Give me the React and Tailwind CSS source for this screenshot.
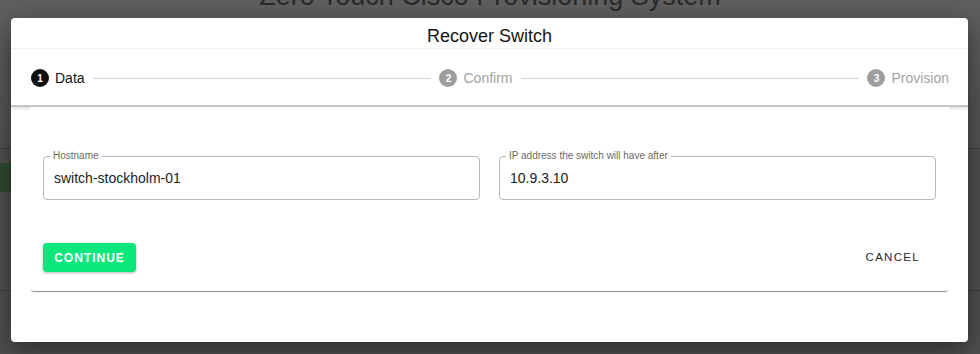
import React from 'react';

const StepIcon = ({ n, active }) => (
  <span
    className={`flex h-[18px] w-[18px] shrink-0 items-center justify-center rounded-full text-[10px] font-bold text-white ${
      active ? 'bg-[#111111]' : 'bg-[#9e9e9e]'
    }`}
  >
    {n}
  </span>
);

const Step = ({ n, label, active }) => (
  <div className="flex items-center gap-[6px]">
    <StepIcon n={n} active={active} />
    <span className={`text-[14px] ${active ? 'text-[#141414]' : 'text-[#a3a3a3]'}`}>{label}</span>
  </div>
);

const Field = ({ label, value }) => (
  <div className="relative h-[44px] flex-1 rounded-[4px] border border-[#b9b9b9]">
    <span className="absolute left-[6px] top-[-7px] bg-white px-[3px] text-[10px] leading-[12px] text-[#6b6b6b]">
      {label}
    </span>
    <div className="flex h-full items-center pl-[10px] pt-[1px] text-[14px] text-[#222222]">{value}</div>
  </div>
);

export default function App() {
  return (
    <div
      className="relative h-[354px] w-[980px] overflow-hidden bg-[#4f4f4f]"
      style={{ fontFamily: '"Liberation Sans", Arial, sans-serif' }}
    >
      {/* page behind the dialog */}
      <div className="flex h-[148px] flex-col bg-gradient-to-b from-[#5f5f5f] to-[#525252]">
        <div className="mt-[-21px] text-center text-[27px] leading-[34px] text-[#2a2a2a]">
          Zero Touch Cisco Provisioning System
        </div>
      </div>
      <div className="border-t border-[#3f3f3f] pt-[14px]">
        <div className="flex h-[29px] w-[40px] items-center justify-end bg-[#2f4a30] pr-[4px] text-[13px] text-[#5d6d5d]">
          39
        </div>
      </div>
      <div className="mt-[98px] border-t border-[#3c3c3c]" />

      {/* dialog */}
      <div className="absolute left-[11px] top-[18px] flex h-[324px] w-[957px] flex-col rounded-[4px] bg-white shadow-[0_8px_24px_rgba(0,0,0,0.45)]">
        <div className="flex h-[31px] items-center justify-center border-b border-[#f2f2f2] pt-[6px] text-[18px] text-[#151515]">
          Recover Switch
        </div>

        <div className="flex h-[58px] items-center border-b-2 border-[#c4c4c4] pl-[20px] pr-[19px] pt-[2px] shadow-[0_2px_3px_rgba(0,0,0,0.12)]">
          <Step n={1} label="Data" active />
          <div className="mx-[8px] h-px flex-1 bg-[#d4d4d4]" />
          <Step n={2} label="Confirm" />
          <div className="mx-[8px] h-px flex-1 bg-[#d4d4d4]" />
          <Step n={3} label="Provision" />
        </div>

        <div className="mx-[19px] rounded-b-[4px] bg-white px-[13px] pb-[19px] pt-[49px] shadow-[0_2px_1px_-1px_rgba(0,0,0,0.45)]">
          <div className="flex gap-[19px]">
            <Field label="Hostname" value="switch-stockholm-01" />
            <Field label="IP address the switch will have after" value="10.9.3.10" />
          </div>
          <div className="mt-[43px] flex items-center justify-between">
            <button className="h-[29px] w-[93px] rounded-[4px] bg-[#0ce77b] text-[12px] font-bold tracking-[1px] text-white shadow-[0_1px_3px_rgba(0,0,0,0.3)]">
              CONTINUE
            </button>
            <button className="mr-[14px] h-[29px] px-[2px] text-[11.5px] tracking-[1.3px] text-[#2a2a2a]">
              CANCEL
            </button>
          </div>
        </div>
      </div>
    </div>
  );
}
